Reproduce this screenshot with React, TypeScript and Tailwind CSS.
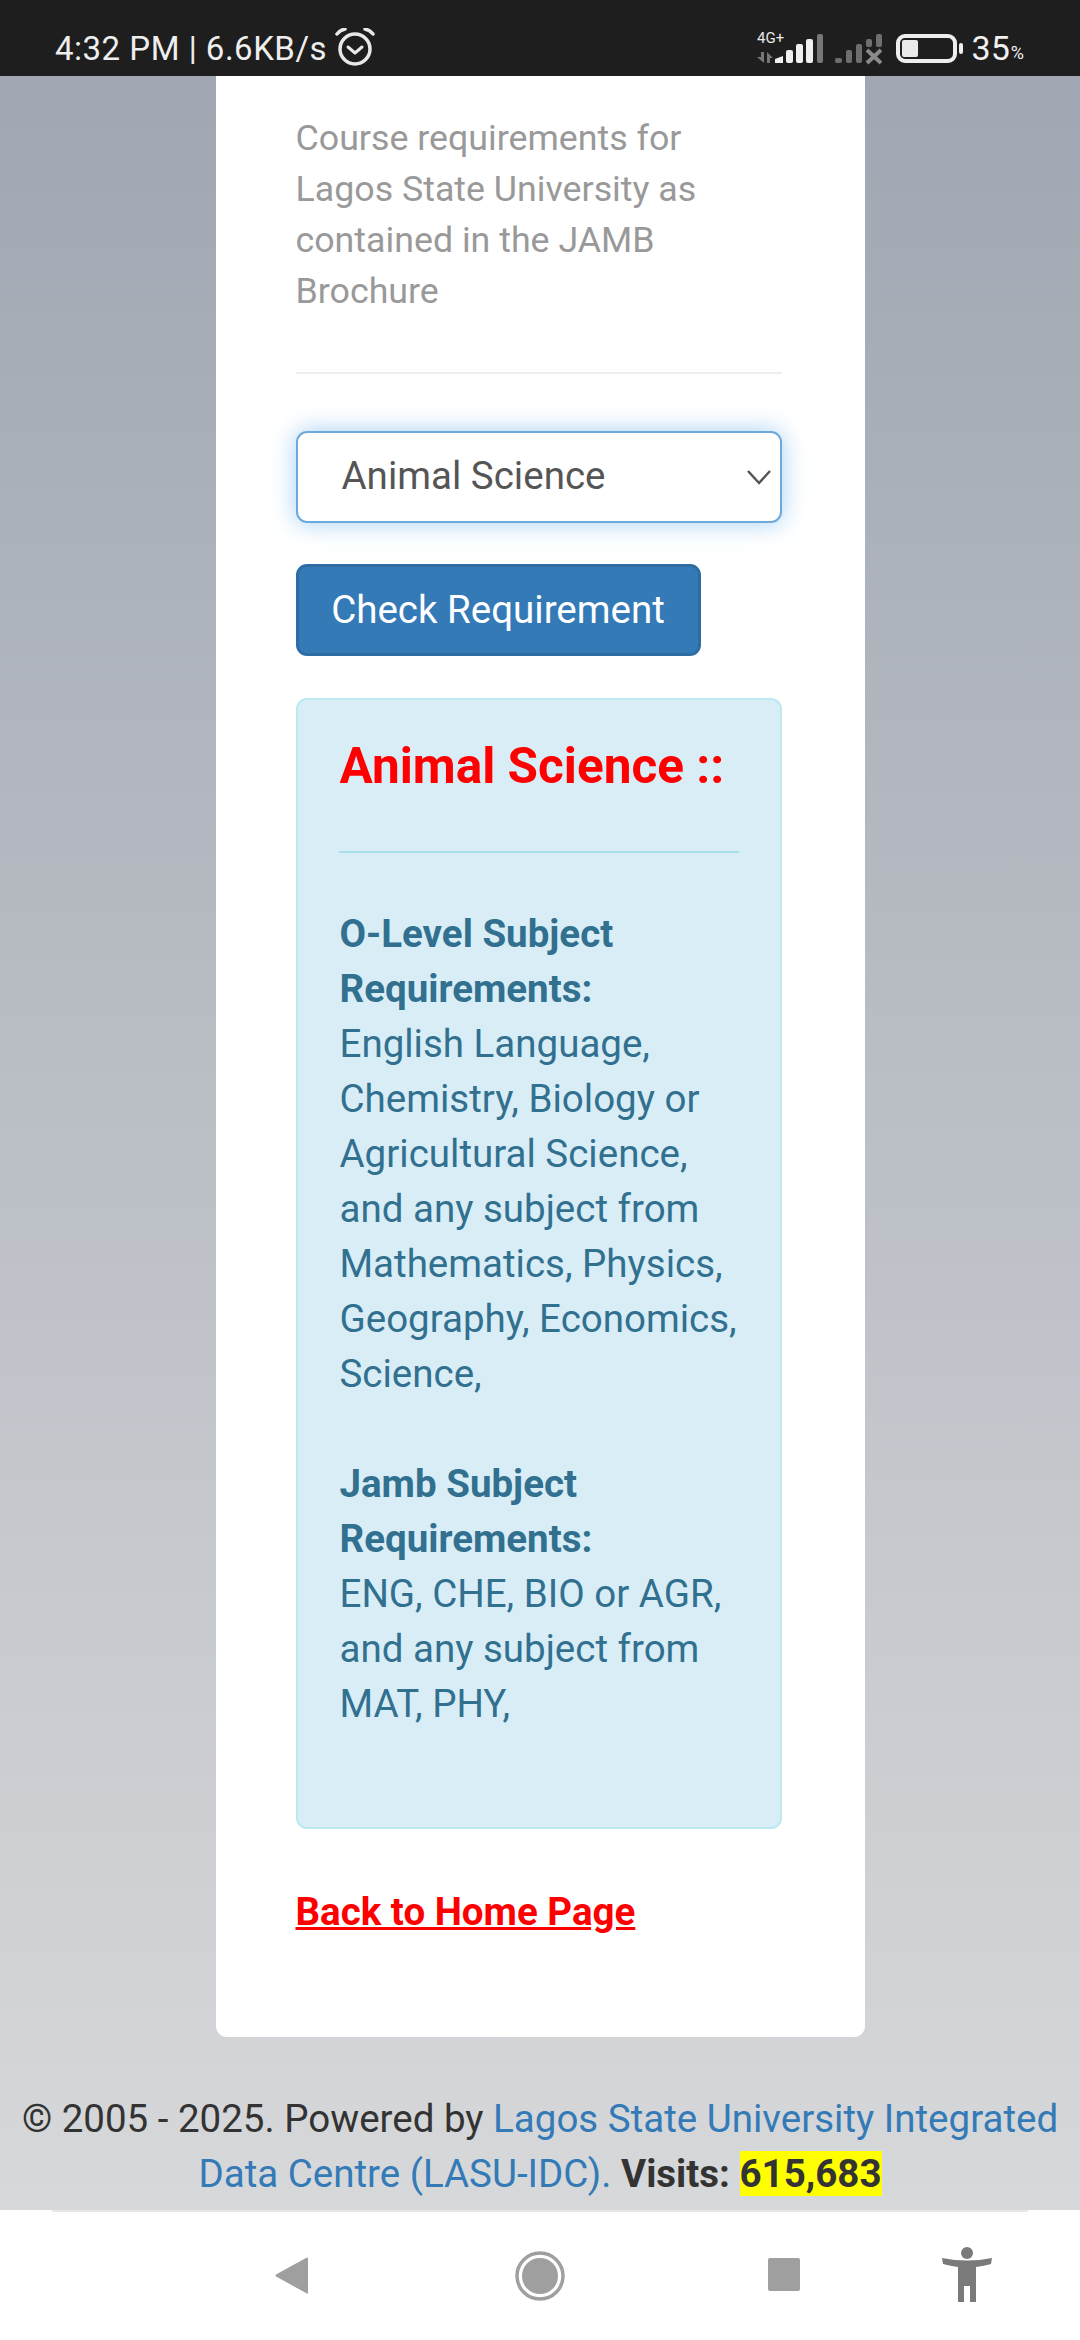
const font = { fontFamily: 'Roboto, "Liberation Sans", sans-serif' };

function AlarmIcon() {
  return (
    <svg width="42" height="40" viewBox="0 0 42 40" fill="none" stroke="#e8e8e8" className="ml-[7px]">
      <circle cx="21" cy="21" r="15" strokeWidth="3.5" />
      <path d="M14 19l7 6 7-6" strokeWidth="3" strokeLinecap="round" strokeLinejoin="round" />
      <path d="M3 6 Q6 2 11 1 M39 6 Q36 2 31 1" strokeWidth="3.5" strokeLinecap="round" />
    </svg>
  );
}

function StatusIcons() {
  return (
    <div className="flex items-center">
      <svg width="66" height="34" viewBox="0 0 66 34" className="mr-[12px]">
        <text x="0" y="12" fill="#e8e8e8" fontSize="15" style={font}>4G+</text>
        <path d="M7 21 L7 32 L0 26 L4 26 L4 21Z" fill="#777" />
        <path d="M10 21 L16 27 L13 27 L13 32 L10 32Z" fill="#777" />
        <path d="M18 28 L26 25 L26 32 L18 32Z" fill="#f0f0f0" />
        <rect x="29" y="19" width="7" height="13" rx="2" fill="#f0f0f0" />
        <rect x="39" y="13" width="7" height="19" rx="2" fill="#f0f0f0" />
        <rect x="49" y="8" width="7" height="24" rx="2" fill="#f0f0f0" />
        <rect x="60" y="3" width="6" height="29" rx="2" fill="#777" />
      </svg>
      <svg width="47" height="34" viewBox="0 0 47 34" className="mr-[14px]">
        <rect x="0" y="27" width="7" height="5" rx="2" fill="#6e6e6e" />
        <rect x="11" y="19" width="6" height="13" rx="2" fill="#6e6e6e" />
        <rect x="21" y="13" width="6" height="19" rx="2" fill="#6e6e6e" />
        <rect x="31" y="8" width="6" height="8" rx="2" fill="#6e6e6e" />
        <rect x="41" y="3" width="6" height="13" rx="2" fill="#6e6e6e" />
        <path d="M32 19 L46 32 M46 19 L32 32" stroke="#8a8a8a" strokeWidth="4" />
      </svg>
      <div className="w-[61px] h-[29px] border-[4px] border-[#eeeeee] rounded-[9px] p-[2px]">
        <div className="w-[16px] h-full bg-[#e8e8e8] rounded-[2px]" />
      </div>
      <div className="w-[4px] h-[11px] bg-[#eeeeee] rounded-full ml-[2px] mr-[9px]" />
      <span className="text-[34px] text-[#f0f0f0] leading-none">35</span>
      <span className="text-[18px] text-[#f0f0f0] leading-none self-end mb-[3px] ml-[1px]">%</span>
    </div>
  );
}

function NavBar() {
  return (
    <div className="relative h-[130px] shrink-0 bg-white">
      <div className="h-[2px] bg-[#e6e7e8] mx-[52px]" />
      <svg width="33" height="37" viewBox="0 0 33 37" className="absolute left-[275px] top-[47px]">
        <path d="M33 1 L33 36 Q33 37 31 36 L1 19.5 Q0 18.5 1 17.5 L31 1 Q33 0 33 1Z" fill="#9f9f9f" />
      </svg>
      <svg width="50" height="50" viewBox="0 0 50 50" className="absolute left-[515px] top-[41px]">
        <circle cx="25" cy="25" r="23" fill="none" stroke="#9f9f9f" strokeWidth="3.5" />
        <circle cx="25" cy="25" r="18" fill="#9f9f9f" />
      </svg>
      <div className="absolute left-[768px] top-[48px] w-[32px] h-[33px] bg-[#9f9f9f] rounded-[2px]" />
      <svg width="50" height="55" viewBox="0 0 50 55" className="absolute left-[942px] top-[37px]">
        <circle cx="25" cy="6" r="6" fill="#7a7a7a" />
        <path d="M0 11 Q25 16 50 11 L49 17 Q42 19 34 20 L34 55 L28 55 L28 39 L22 39 L22 55 L16 55 L16 20 Q8 19 1 17 Z" fill="#7a7a7a" />
      </svg>
    </div>
  );
}

export default function App() {
  return (
    <div className="w-[1080px] h-[2340px] overflow-hidden flex flex-col" style={font}>
      {/* status bar */}
      <div className="h-[76px] shrink-0 bg-[#1e1e1e] flex items-center justify-between pl-[55px] pr-[56px] pt-[20px] text-[#eeeeee]">
        <div className="flex items-center text-[33px] leading-none tracking-[0.5px]">
          <span>4:32 PM | 6.6KB/s</span>
          <AlarmIcon />
        </div>
        <StatusIcons />
      </div>

      <main className="flex-1 bg-gradient-to-b from-[#a0a7b2] to-[#d7d8da] flex flex-col items-center text-[38.5px] leading-[55px] text-[#333333]">
        {/* card */}
        <div className="w-[649px] h-[1961px] shrink-0 bg-white rounded-b-[11px] pl-[80px] pr-[83px] pt-[37px]">
          <p className="text-[35.75px] leading-[51px] text-[#999999]">
            Course requirements for Lagos State University as contained in the JAMB Brochure
          </p>
          <div className="h-[2px] bg-[#eeeeee] mt-[55px] mb-[57px]" />

          <div className="h-[92px] rounded-[11px] border-[2.5px] border-[#6ca9dd] shadow-[0_0_24px_rgba(102,175,233,0.6)] bg-white flex items-center justify-between pl-[44px] pr-[9px] pb-[3px] text-[#555555]">
            <span>Animal Science</span>
            <svg width="24" height="15" viewBox="0 0 24 15" fill="none" stroke="#555555" strokeWidth="2.5" className="mt-[3px]">
              <path d="M1 1 L12 13 L23 1" />
            </svg>
          </div>

          <button className="mt-[41px] block w-[405px] h-[92px] rounded-[11px] border-[3px] border-[#2e6da4] bg-[#337ab7] text-white text-center pb-[2px]">
            Check Requirement
          </button>

          <div className="mt-[42px] h-[1131px] rounded-[11px] border-[2px] border-[#bce8f1] bg-[#d9edf7] text-[#31708f] pl-[42px] pr-[41px] pt-[30px]">
            <h3 className="text-[49.5px] leading-[72px] font-bold text-[#ff0000]">Animal Science ::</h3>
            <div className="h-[2px] bg-[#a9dfec] mt-[49px] mb-[53px] -ml-[1px]" />
            <b className="block">O-Level Subject Requirements:</b>
            <p>English Language, Chemistry, Biology or Agricultural Science, and any subject from Mathematics, Physics, Geography, Economics, Science,</p>
            <b className="block mt-[55px]">Jamb Subject Requirements:</b>
            <p>ENG, CHE, BIO or AGR, and any subject from MAT, PHY,</p>
          </div>

          <a href="#" className="block mt-[55px] font-bold text-[#ff0000] underline">Back to Home Page</a>
        </div>

        {/* footer */}
        <p className="mt-[54px] text-center w-full px-[20px]">
          © 2005 - 2025. Powered by <a href="#" className="text-[#337ab7]">Lagos State University Integrated Data Centre (LASU-IDC).</a>{' '}
          <b>Visits:</b> <b className="bg-[#ffff00]">615,683</b>
        </p>
      </main>

      <NavBar />
    </div>
  );
}
